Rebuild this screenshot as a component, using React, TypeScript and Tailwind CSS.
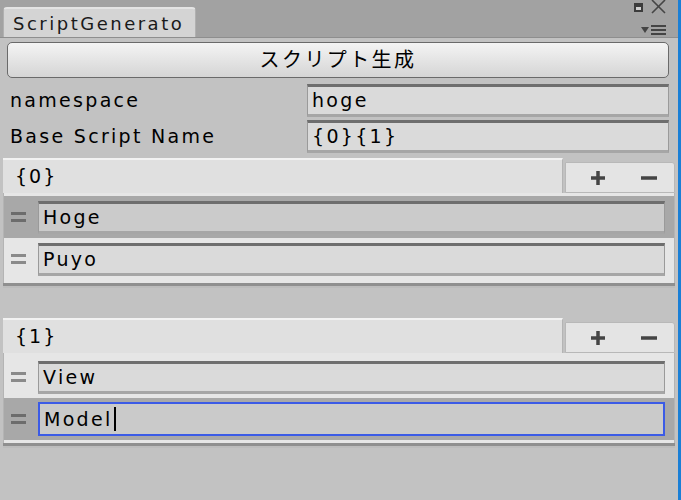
import React from "react";

const font = { fontFamily: '"DejaVu Sans", "Noto Sans CJK JP", sans-serif' };

function Handle({ selected }: { selected?: boolean }) {
  const bar = selected ? "h-[3px] w-[15px] bg-[#6c6c6c]" : "h-[3px] w-[15px] bg-[#8a8a8a]";
  return (
    <div className="flex w-[31px] shrink-0 flex-col items-start gap-[4px] pl-[4px]">
      <span className={bar} />
      <span className={bar} />
    </div>
  );
}

function Field({
  value,
  dark,
  focused,
}: {
  value: string;
  dark?: boolean;
  focused?: boolean;
}) {
  if (focused) {
    return (
      <div className="flex h-[34px] flex-1 items-center border-2 border-[#3b5be6] bg-[#cacaca] pl-[4px] text-[19px] tracking-[2.3px] text-black">
        {value}
        <span className="ml-[1px] h-[24px] w-[2px] bg-black" />
      </div>
    );
  }
  return (
    <div
      className={
        "flex h-[33px] flex-1 items-center border border-[#9a9a9a] border-t-[3px] border-t-[#6e6e6e] border-b-[3px] border-b-[#a6a6a6] pl-[4px] text-[19px] tracking-[2.3px] text-black " +
        (dark ? "bg-[#cbcbcb]" : "bg-[#dadada]")
      }
    >
      {value}
    </div>
  );
}

function Item({
  value,
  selected,
  focused,
}: {
  value: string;
  selected?: boolean;
  focused?: boolean;
}) {
  return (
    <div
      className={
        "flex h-[42px] items-center pl-[3px] pr-[9px] " +
        (selected ? "bg-[#a8a8a8]" : "bg-[#e6e6e6]")
      }
    >
      <Handle selected={selected} />
      <Field value={value} dark={selected} focused={focused} />
    </div>
  );
}

function ReorderList({
  title,
  items,
}: {
  title: string;
  items: { value: string; selected?: boolean; focused?: boolean }[];
}) {
  return (
    <div className="ml-[3px] mr-[3px]">
      {/* header */}
      <div className="flex h-[35px]">
        <div className="flex flex-1 items-center border-t-2 border-t-[#f2f2f2] border-r border-r-[#b4b4b4] bg-[#e0e0e0] pl-[12px] text-[19px] tracking-[2px] text-black">
          {title}
        </div>
        <div className="ml-[2px] mt-[4px] flex w-[110px] items-center justify-around rounded-tr-[3px] border border-[#b8b8b8] bg-[#e4e4e4] pl-[6px]">
          <svg width="18" height="18" viewBox="0 0 18 18">
            <path d="M9 2v14M2 9h14" stroke="#444" strokeWidth="3.5" />
          </svg>
          <svg width="18" height="18" viewBox="0 0 18 18">
            <path d="M1 9h16" stroke="#444" strokeWidth="3.5" />
          </svg>
        </div>
      </div>
      {/* body */}
      <div className="border-x border-[#b4b4b4] bg-[#e6e6e6] pb-[3px] pt-[3px]">
        {items.map((it) => (
          <Item key={it.value} {...it} />
        ))}
      </div>
      <div className="h-[3px] bg-[#8f8f8f]" />
      <div className="h-[2px] bg-[#bcbcbc]" />
    </div>
  );
}

export default function App() {
  return (
    <div className="flex h-[500px] w-[681px] bg-[#c2c2c2]" style={font}>
      <div className="flex w-[678px] flex-col">
        {/* title bar */}
        <div className="flex h-[38px] items-end justify-between border-b border-[#8e8e8e] bg-[#a2a2a2]">
          <div className="ml-[3px] flex h-[30px] w-[193px] items-center rounded-t-[4px] border-t-2 border-x border-[#e4e4e4] border-x-[#b0b0b0] bg-[#d4d4d4] pl-[9px] text-[18px] tracking-[2.5px] text-[#1a1a1a]">
            ScriptGenerato
          </div>
          <div className="mb-[2px] mr-[12px] flex h-[36px] flex-col items-end justify-between">
            <div className="flex items-center gap-[8px]">
              <span className="mt-[2px] h-[9px] w-[9px] border-2 border-t-[4px] border-[#3c3c3c] bg-[#d0d0d0]" />
              <svg width="15" height="15" viewBox="0 0 15 15">
                <path d="M1 1l13 13M14 1L1 14" stroke="#454545" strokeWidth="1.6" />
              </svg>
            </div>
            <div className="flex items-center gap-[2px]">
              <svg width="8" height="6" viewBox="0 0 8 6">
                <path d="M0 0h8L4 6z" fill="#444" />
              </svg>
              <div className="flex w-[15px] flex-col gap-[2px]">
                <span className="h-[2px] bg-[#444]" />
                <span className="h-[2px] bg-[#444]" />
                <span className="h-[2px] bg-[#444]" />
              </div>
            </div>
          </div>
        </div>

        {/* generate button */}
        <div className="ml-[7px] mr-[9px] mt-[4px] flex h-[36px] items-center justify-center rounded-[5px] border border-[#6a6a6a] bg-gradient-to-b from-[#f4f4f4] to-[#d5d5d5] text-[20px] tracking-[2.4px] text-black">
          スクリプト生成
        </div>

        {/* properties */}
        <div className="mt-[7px] flex h-[31px] items-center pr-[9px]">
          <div className="w-[307px] pl-[10px] text-[19px] tracking-[2.3px] text-black">namespace</div>
          <Field value="hoge" />
        </div>
        <div className="mt-[5px] flex h-[31px] items-center pr-[9px]">
          <div className="w-[307px] pl-[10px] text-[19px] tracking-[2.3px] text-black">Base Script Name</div>
          <Field value="{0}{1}" />
        </div>

        <div className="mt-[6px]">
          <ReorderList
            title="{0}"
            items={[{ value: "Hoge", selected: true }, { value: "Puyo" }]}
          />
        </div>

        <div className="mt-[30px]">
          <ReorderList
            title="{1}"
            items={[{ value: "View" }, { value: "Model", selected: true, focused: true }]}
          />
        </div>
      </div>
      <div className="w-[3px] bg-[#1a7fd6]" />
    </div>
  );
}
